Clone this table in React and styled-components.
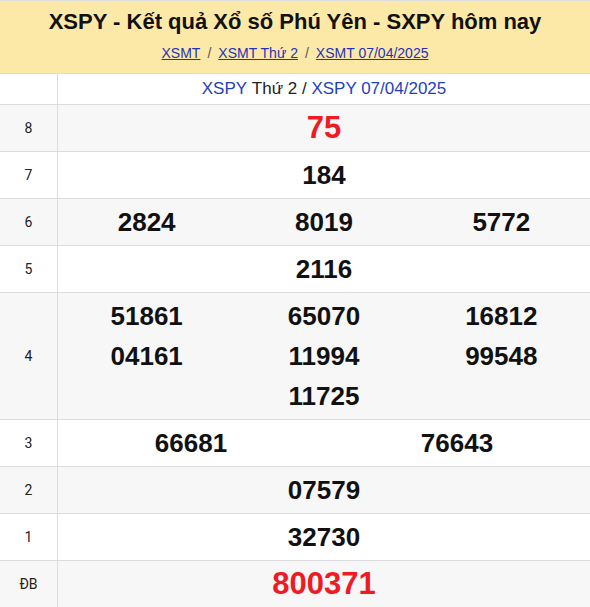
import React from "react";
import styled, { createGlobalStyle } from "styled-components";

const Global = createGlobalStyle`
  html, body { margin: 0; padding: 0; background: #fff; }
  body { font-family: "Liberation Sans", Arial, sans-serif; }
`;

const Page = styled.div`
  width: 590px;
`;

const Header = styled.header`
  background: #fde9a7;
  border-top: 1px solid #dddddd;
  border-bottom: 1px solid #dddddd;
  height: 72px;
  display: flex;
  flex-direction: column;
  align-items: center;
`;

const Title = styled.h1`
  margin: 8px 0 0;
  font-size: 22px;
  font-weight: bold;
  color: #111;
  line-height: 26px;
`;

const Crumbs = styled.nav`
  margin-top: 10px;
  font-size: 14px;
  line-height: 16px;
  color: #555;
  display: flex;
  gap: 7px;
`;

const Crumb = styled.a`
  color: #2432b8;
  text-decoration: underline;
`;

const Row = styled.div`
  display: grid;
  grid-template-columns: 58px 1fr;
  border-bottom: 1px solid #dcdce0;
  background: ${(p) => (p.$alt ? "#f7f7f7" : "#ffffff")};
`;

const Label = styled.div`
  border-right: 1px solid #dcdce0;
  display: flex;
  align-items: center;
  justify-content: center;
  font-family: Roboto, "Liberation Sans", Arial, sans-serif;
  font-size: 14px;
  color: #222;
`;

const HeadCell = styled.div`
  height: 30px;
  display: flex;
  align-items: center;
  justify-content: center;
  font-size: 17px;
  color: #222;
`;

const Blue = styled.span`
  color: #1f3fc0;
`;

const Cell = styled.div`
  padding: 3px 0;
  display: flex;
  flex-wrap: wrap;
  justify-content: center;
`;

const Num = styled.div`
  width: ${(p) => p.$w};
  text-align: center;
  line-height: 40px;
  font-weight: bold;
  font-size: ${(p) => (p.$big ? "31px" : "26px")};
  color: ${(p) => (p.$red ? "#ee1b24" : "#111")};
`;

const prizes = [
  { label: "8", nums: ["75"], cols: 1, big: true, red: true },
  { label: "7", nums: ["184"], cols: 1 },
  { label: "6", nums: ["2824", "8019", "5772"], cols: 3 },
  { label: "5", nums: ["2116"], cols: 1 },
  {
    label: "4",
    nums: ["51861", "65070", "16812", "04161", "11994", "99548", "11725"],
    cols: 3,
  },
  { label: "3", nums: ["66681", "76643"], cols: 2 },
  { label: "2", nums: ["07579"], cols: 1 },
  { label: "1", nums: ["32730"], cols: 1 },
  { label: "ĐB", nums: ["800371"], cols: 1, big: true, red: true },
];

export default function App() {
  return (
    <Page>
      <Global />
      <Header>
        <Title>XSPY - Kết quả Xổ số Phú Yên - SXPY hôm nay</Title>
        <Crumbs>
          <Crumb>XSMT</Crumb>
          <span>/</span>
          <Crumb>XSMT Thứ 2</Crumb>
          <span>/</span>
          <Crumb>XSMT 07/04/2025</Crumb>
        </Crumbs>
      </Header>
      <Row>
        <Label />
        <HeadCell>
          <Blue>XSPY</Blue>&nbsp;Thứ 2 /&nbsp;<Blue>XSPY 07/04/2025</Blue>
        </HeadCell>
      </Row>
      {prizes.map((p, i) => (
        <Row key={p.label} $alt={i % 2 === 0}>
          <Label>{p.label}</Label>
          <Cell>
            {p.nums.map((n) => (
              <Num
                key={n}
                $w={`${100 / p.cols}%`}
                $big={p.big}
                $red={p.red}
              >
                {n}
              </Num>
            ))}
          </Cell>
        </Row>
      ))}
    </Page>
  );
}
